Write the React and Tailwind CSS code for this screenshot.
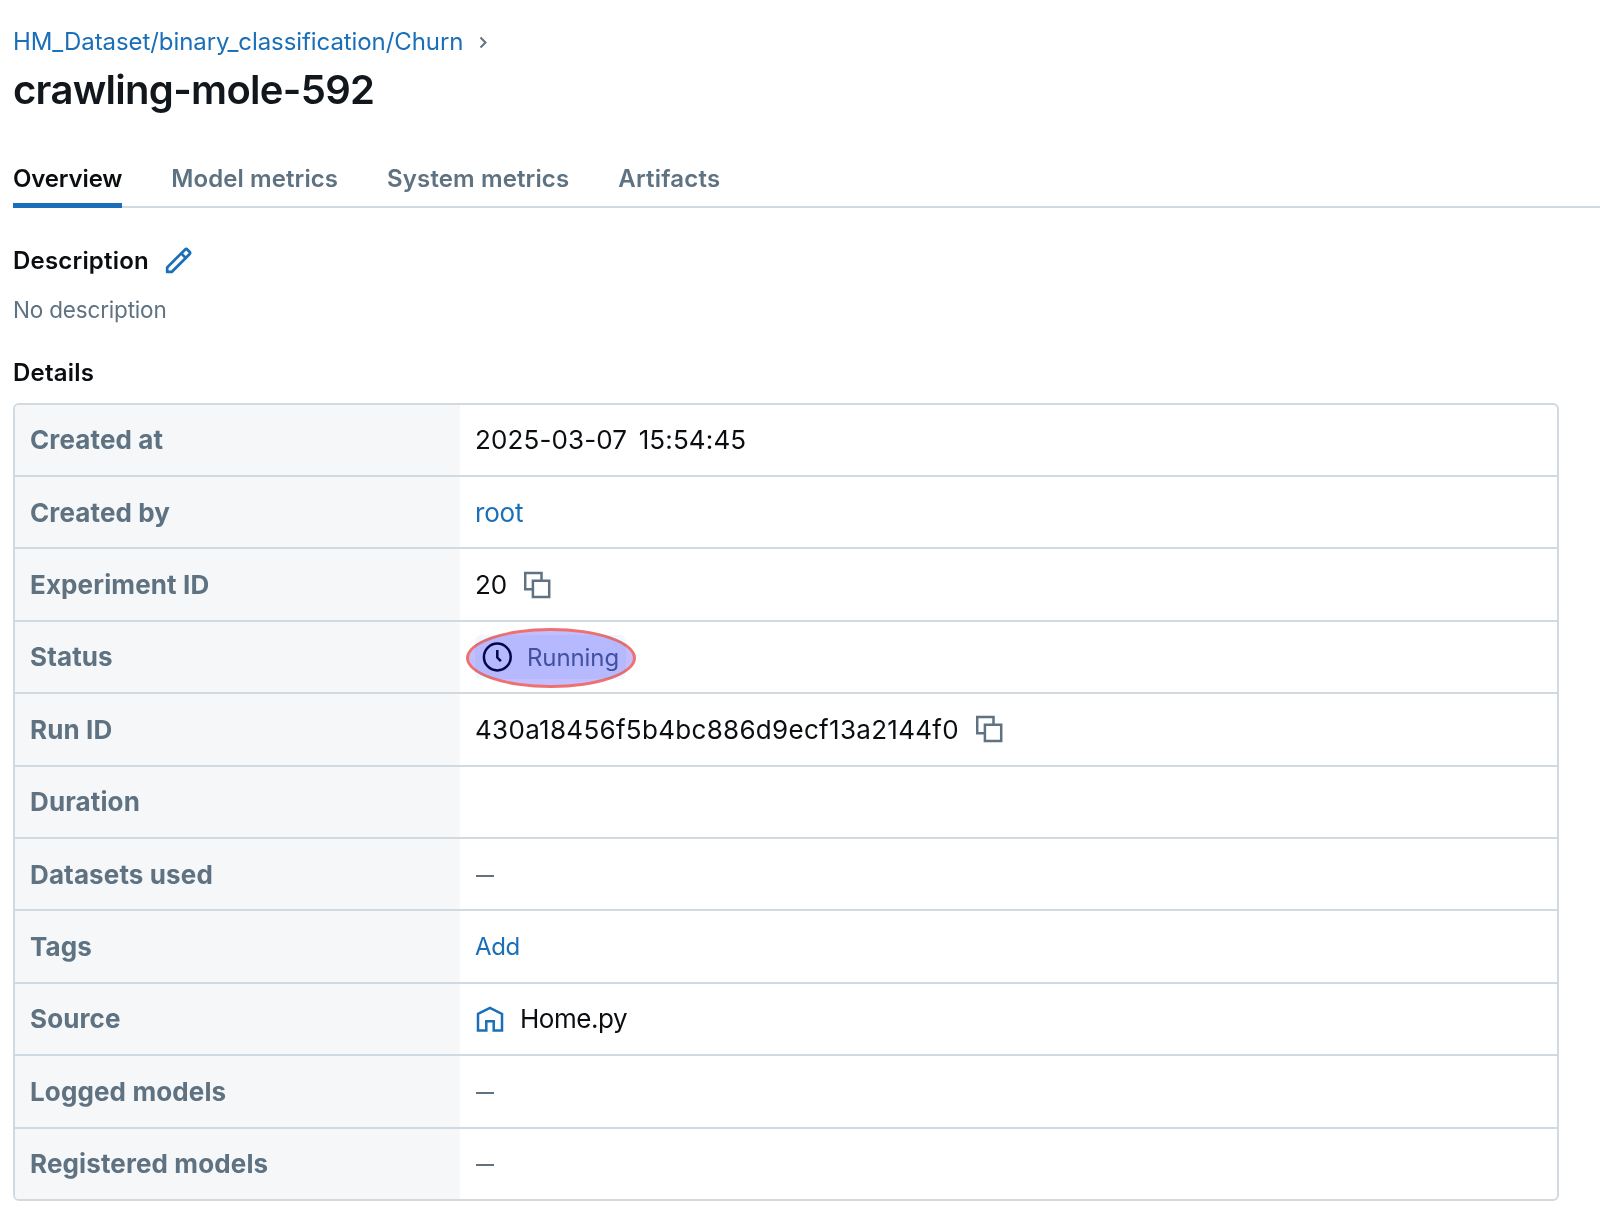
const tabs = [
  { label: "Overview", style: "h-[46px] border-b-[5px] border-[#1a6fb8] pt-px pb-[8px] text-[#0b0e11] tracking-[-0.15px]" },
  { label: "Model metrics", style: "h-[46px] pt-px pb-[13px] tracking-[0.08px]" },
  { label: "System metrics", style: "h-[46px] pt-px pb-[13px] tracking-[0.12px]" },
  { label: "Artifacts", style: "h-[46px] pt-px pb-[13px] tracking-[0.2px]" },
];

function PencilIcon() {
  return (
    <svg className="-mt-px -ml-px size-[29px]" viewBox="0 0 16 16" fill="#1a6fb8">
      <path fillRule="evenodd" clipRule="evenodd" d="M13.487 1.513a1.75 1.75 0 0 0-2.474 0L1.22 11.306a.75.75 0 0 0-.22.53v2.5c0 .414.336.75.75.75h2.5a.75.75 0 0 0 .53-.22l9.793-9.793a1.75 1.75 0 0 0 0-2.475zm-1.414 1.06a.25.25 0 0 1 .354 0l1.086 1.086a.25.25 0 0 1 0 .354L12 5.525l-1.44-1.439zM9.5 5.146l-7 7v1.44h1.44l7-7z" />
    </svg>
  );
}

function CopyIcon() {
  return (
    <svg className="size-[28px]" viewBox="0 0 28 28" fill="none" stroke="#5f7281" strokeWidth="2.5">
      <path d="M8.9 18.2H1.2V2h16.3v7.8" />
      <path d="M8.9 9.8h16.3V26H8.9z" />
    </svg>
  );
}

function ClockIcon() {
  return (
    <svg className="size-[30px]" viewBox="0 0 30 30" fill="none" stroke="#05054d" strokeWidth="2.5">
      <circle cx="15.3" cy="15" r="13.4" />
      <path d="M15.3 8v7.6l3.6 3.6" />
    </svg>
  );
}

function HomeIcon() {
  return (
    <svg className="size-[28px] overflow-visible" viewBox="0 0 28 28" fill="none" stroke="#1a6fb8" strokeWidth="2.5">
      <path d="M3 8.9 15 2.9l12 6v16.7h-8.3v-9.4h-7.4v9.4H3z" />
    </svg>
  );
}

const Dash = () => <div className="mt-[3px] ml-px h-[2px] w-[18px] bg-[#5f7281]" />;

const rows = [
  ["Created at", <span className="text-[26px] tracking-[0.13px] [word-spacing:4px]">2025-03-07 15:54:45</span>],
  ["Created by", <span className="text-[26px] tracking-[-0.2px] text-[#1a6fb8]">root</span>],
  ["Experiment ID", <><span className="text-[26px]">20</span><CopyIcon /></>],
  [
    "Status",
    <div className="relative flex h-[44px] w-[151px] items-center gap-[15px] rounded-md bg-[#f0f8ff] pl-[7px]">
      <div className="absolute top-[-7px] left-[-9px] h-[60px] w-[170px] rounded-[50%] border-[3px] border-[#ef7070] bg-[#c3beff] mix-blend-multiply" />
      <span className="relative"><ClockIcon /></span>
      <span className="relative pt-[2px] text-[24px] tracking-[-0.1px] text-[#41509f]">Running</span>
    </div>,
  ],
  ["Run ID", <><span className="text-[26px] tracking-[0.3px]">430a18456f5b4bc886d9ecf13a2144f0</span><CopyIcon /></>],
  ["Duration", null],
  ["Datasets used", <Dash />],
  ["Tags", <span className="pt-px text-[24px] tracking-[-0.4px] text-[#1a6fb8]">Add</span>],
  ["Source", <><HomeIcon /><span className="text-[26px] tracking-[-0.45px]">Home.py</span></>],
  ["Logged models", <Dash />],
  ["Registered models", <Dash />],
];

export default function App() {
  return (
    <main className="h-[1221px] w-[1600px] overflow-hidden bg-white pt-[26px] pl-[13px] font-['Inter',sans-serif] text-[#0b0e11]">
      <nav className="flex h-8 items-center gap-[16px] text-[24px] leading-8">
        <a className="tracking-[-0.08px] text-[#1a6fb8]">HM_Dataset/binary_classification/Churn</a>
        <svg className="mt-px h-[13px] w-[9px]" viewBox="0 0 9 13" fill="none" stroke="#5f7281" strokeWidth="2"><path d="m1.5 1.5 5 5-5 5" /></svg>
      </nav>
      <h1 className="mt-[8px] h-12 text-[40px] leading-[48px] font-semibold tracking-[-0.7px] text-[#11171c]">crawling-mole-592</h1>
      <div className="mt-[48px] flex h-[46px] gap-[49px] border-b-2 border-[#d1d9e1] text-[24px] leading-8 font-semibold text-[#5f7281]">
        {tabs.map((t) => (
          <button key={t.label} className={t.style}>{t.label}</button>
        ))}
      </div>
      <div className="mt-[37px] flex h-8 items-center gap-[16px]">
        <h2 className="text-[24px] leading-8 font-semibold tracking-[0.19px]">Description</h2>
        <PencilIcon />
      </div>
      <p className="mt-[17px] h-8 text-[22.5px] leading-8 tracking-[-0.18px] text-[#5f7281]">No description</p>
      <h2 className="mt-[31px] h-8 text-[24px] leading-8 font-semibold tracking-[0.2px]">Details</h2>
      <div className="mt-[14px] grid h-[798px] w-[1546px] grid-rows-[70px_repeat(10,minmax(0,1fr))] overflow-hidden rounded-md border-2 border-[#d1d9e1]">
        {rows.map(([label, value], i) => (
          <div key={label} className={i ? "flex border-t-2 border-[#d1d9e1]" : "flex *:pb-[2px]"}>
            <div className="flex w-[445px] items-center bg-[#f6f7f9] pl-[15px] text-[26px] font-bold tracking-[0.12px] text-[#5f7281]">{label}</div>
            <div className="flex items-center gap-[17px] pl-[15px]">{value}</div>
          </div>
        ))}
      </div>
    </main>
  );
}
